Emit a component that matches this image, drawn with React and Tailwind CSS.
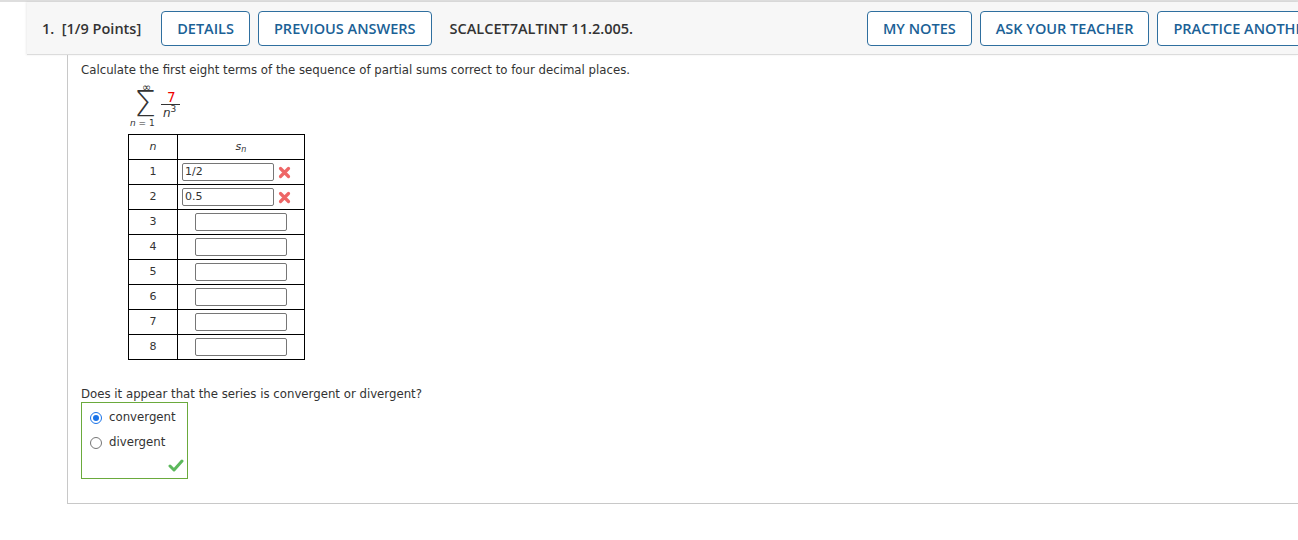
import React from "react";

const sans = { fontFamily: '"Open Sans", "Noto Sans", sans-serif' };
const body = { fontFamily: '"DejaVu Sans", Verdana, sans-serif' };

const HeaderButton = ({ label }) => (
  <button className="h-[35px] px-[15px] pt-[1px] shrink-0 rounded-[4px] border border-[#2f6f9f] bg-white text-[14.5px] font-semibold text-[#1b6196] whitespace-nowrap">
    {label}
  </button>
);

const RedX = () => (
  <svg width="13" height="13" viewBox="0 0 13 13" className="shrink-0">
    <path d="M2.5 2.5 L10.5 10.5 M10.5 2.5 L2.5 10.5" stroke="#ee6666" strokeWidth="3.2" strokeLinecap="round" />
  </svg>
);

const Check = () => (
  <svg width="16" height="13" viewBox="0 0 16 13">
    <path d="M2 7 L6 11 L14 2" fill="none" stroke="#5cb85c" strokeWidth="3" strokeLinecap="round" strokeLinejoin="round" />
  </svg>
);

const rows = [
  { n: 1, value: "1/2", wrong: true },
  { n: 2, value: "0.5", wrong: true },
  { n: 3 },
  { n: 4 },
  { n: 5 },
  { n: 6 },
  { n: 7 },
  { n: 8 },
];

const Radio = ({ checked }) =>
  checked ? (
    <span className="w-[12px] h-[12px] rounded-full border-[1.5px] border-[#1a73e8] flex items-center justify-center">
      <span className="w-[6px] h-[6px] rounded-full bg-[#1a73e8]" />
    </span>
  ) : (
    <span className="w-[12px] h-[12px] rounded-full border border-[#767676] bg-white" />
  );

// sum notation: pieces placed like a typeset formula
const SeriesFormula = () => (
  <div className="relative ml-[44px] mt-[4px] w-[60px] h-[50px] text-[#333]">
    <span className="absolute left-[17px] top-[0px] text-[11px] leading-none">∞</span>
    <span className="absolute left-[9px] top-[5px] text-[35px] leading-none font-light">Σ</span>
    <span className="absolute left-[5px] top-[37px] text-[9px] leading-none whitespace-nowrap">
      <i>n</i> = 1
    </span>
    <span className="absolute left-[42px] top-[9px] text-[13.5px] leading-none text-[#e00]">7</span>
    <span className="absolute left-[36px] top-[22px] w-[19px] h-px bg-[#333]" />
    <span className="absolute left-[38px] top-[25px] text-[12px] leading-none italic whitespace-nowrap">
      n<span className="not-italic text-[9px] relative -top-[5px]">3</span>
    </span>
  </div>
);

export default function App() {
  return (
    <div className="w-[1298px] h-[540px] bg-white overflow-hidden">
      <div className="h-[2px] bg-[#dedede]" />
      <div
        className="ml-[27px] h-[53px] bg-[#f7f7f7] border-b border-[#dcdcdc] flex items-center overflow-hidden shadow-[-1px_0_2px_rgba(0,0,0,0.08)]"
        style={sans}
      >
        <div className="w-[840px] shrink-0 flex items-center pl-[15px]">
          <span className="text-[14.5px] font-semibold text-[#333] whitespace-nowrap pt-[1px]">
            1.&nbsp; [1/9 Points]
          </span>
          <div className="ml-[20px] flex gap-[8px]">
            <HeaderButton label="DETAILS" />
            <HeaderButton label="PREVIOUS ANSWERS" />
          </div>
          <span className="ml-[18px] text-[14.5px] font-semibold text-[#333] whitespace-nowrap pt-[1px]">
            SCALCET7ALTINT 11.2.005.
          </span>
        </div>
        <div className="flex gap-[8px] shrink-0">
          <HeaderButton label="MY NOTES" />
          <HeaderButton label="ASK YOUR TEACHER" />
          <HeaderButton label="PRACTICE ANOTHER" />
        </div>
      </div>

      <div
        className="ml-[67px] h-[449px] border-l border-b border-[#c8c8c8] pl-[13px] pt-[7px] text-[#333]"
        style={body}
      >
        <p className="text-[11.75px] leading-[16px]">
          Calculate the first eight terms of the sequence of partial sums correct to four decimal places.
        </p>

        <SeriesFormula />

        <table className="ml-[47px] mt-[2px] border-collapse text-[11px] text-[#333]">
          <thead>
            <tr className="h-[25px]">
              <th className="w-[49px] border border-black font-normal italic">n</th>
              <th className="w-[127px] border border-black font-normal italic">
                s<sub className="text-[8px]">n</sub>
              </th>
            </tr>
          </thead>
          <tbody>
            {rows.map((r) => (
              <tr key={r.n} className="h-[25px]">
                <td className="border border-black text-center">{r.n}</td>
                <td className="border border-black">
                  {r.wrong ? (
                    <div className="flex items-center pl-[4px]">
                      <div className="w-[92px] h-[18px] border border-[#767676] rounded-[2px] px-[2px] text-[11px] leading-[16px]">
                        {r.value}
                      </div>
                      <span className="ml-[4px] flex">
                        <RedX />
                      </span>
                    </div>
                  ) : (
                    <div className="flex justify-center">
                      <div className="w-[92px] h-[18px] border border-[#767676] rounded-[2px]" />
                    </div>
                  )}
                </td>
              </tr>
            ))}
          </tbody>
        </table>

        <p className="mt-[26px] text-[11.75px] leading-[16px]">
          Does it appear that the series is convergent or divergent?
        </p>
        <div className="w-[107px] h-[77px] border border-[#6aaa3c] pl-[8px] pt-[7px] text-[11.75px] relative">
          <label className="flex items-center gap-[7px] h-[16px]">
            <Radio checked />
            <span>convergent</span>
          </label>
          <label className="flex items-center gap-[7px] h-[16px] mt-[9px]">
            <Radio />
            <span>divergent</span>
          </label>
          <div className="absolute right-[3px] bottom-[6px]">
            <Check />
          </div>
        </div>
      </div>
    </div>
  );
}
